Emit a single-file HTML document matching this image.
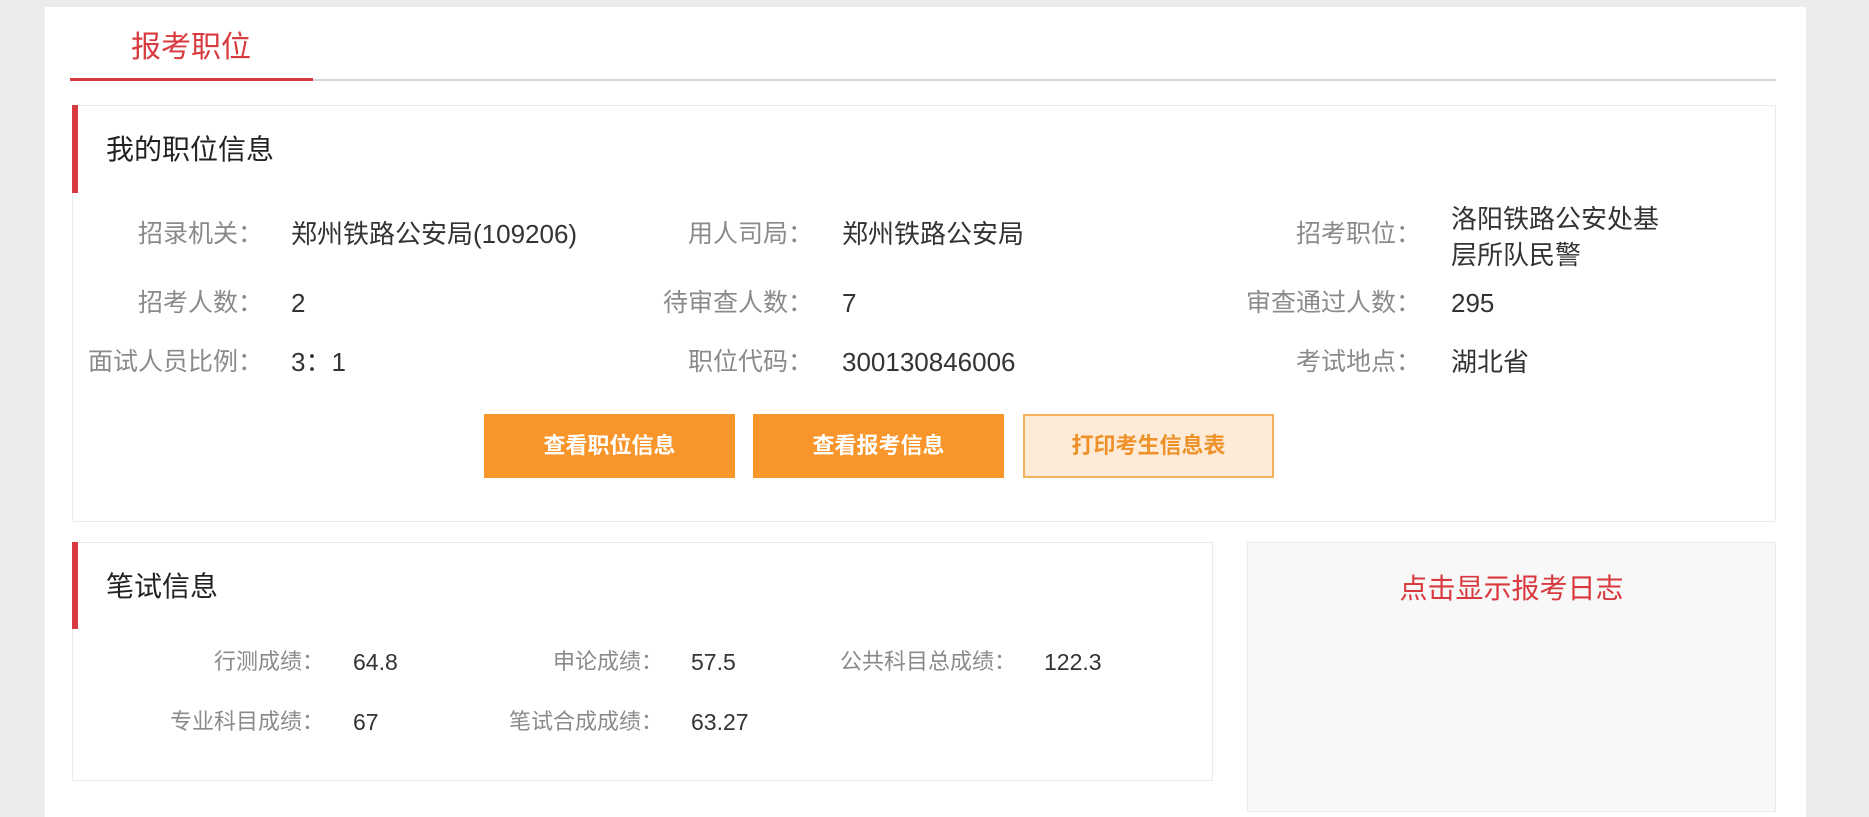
<!DOCTYPE html>
<html><head><meta charset="utf-8"><style>
*{margin:0;padding:0;box-sizing:border-box}
body{width:1869px;height:800px;background:#ececec;font-family:"Liberation Sans","Noto Sans CJK SC",sans-serif;position:relative;overflow:hidden}
.a{position:absolute;white-space:nowrap}
.lb{color:#8a8a8a;font-size:25px;text-align:right;line-height:30px}
.v{color:#333;font-size:26px;line-height:30px}
.lb2{color:#8a8a8a;font-size:22px;text-align:right;line-height:28px}
.v2{color:#333;font-size:23px;line-height:28px}
.btn{position:absolute;top:414px;height:64px;width:251px;background:#f8962b;color:#fff;font-weight:bold;font-size:22px;line-height:64px;text-align:center}
</style></head><body>
<div class="a" style="left:45px;top:7px;width:1761px;height:810px;background:#fff"></div>
<div class="a" style="left:131px;top:27px;font-size:30px;color:#d93a3f;line-height:42px">报考职位</div>
<div class="a" style="left:70px;top:79px;width:1706px;height:2px;background:#d8d8d8"></div>
<div class="a" style="left:70px;top:78px;width:243px;height:3px;background:#d93a3f"></div>

<div class="a" style="left:72px;top:105px;width:1704px;height:417px;border:1px solid #ebebeb"></div>
<div class="a" style="left:72px;top:105px;width:6px;height:88px;background:#d93a3f"></div>
<div class="a" style="left:106px;top:132px;font-size:28px;color:#222;line-height:36px">我的职位信息</div>

<div class="a lb" style="right:1606px;top:219px">招录机关：</div>
<div class="a v" style="left:291px;top:219px">郑州铁路公安局(109206)</div>
<div class="a lb" style="right:1056px;top:219px">用人司局：</div>
<div class="a v" style="left:842px;top:219px">郑州铁路公安局</div>
<div class="a lb" style="right:448px;top:219px">招考职位：</div>
<div class="a v" style="left:1451px;top:201px;line-height:36px">洛阳铁路公安处基<br>层所队民警</div>

<div class="a lb" style="right:1606px;top:288px">招考人数：</div>
<div class="a v" style="left:291px;top:288px">2</div>
<div class="a lb" style="right:1056px;top:288px">待审查人数：</div>
<div class="a v" style="left:842px;top:288px">7</div>
<div class="a lb" style="right:448px;top:288px">审查通过人数：</div>
<div class="a v" style="left:1451px;top:288px">295</div>

<div class="a lb" style="right:1606px;top:347px">面试人员比例：</div>
<div class="a v" style="left:291px;top:347px">3：1</div>
<div class="a lb" style="right:1056px;top:347px">职位代码：</div>
<div class="a v" style="left:842px;top:347px">300130846006</div>
<div class="a lb" style="right:448px;top:347px">考试地点：</div>
<div class="a v" style="left:1451px;top:347px">湖北省</div>

<div class="btn" style="left:484px">查看职位信息</div>
<div class="btn" style="left:753px">查看报考信息</div>
<div class="btn" style="left:1023px;background:#fdebd8;border:2px solid #f5b25c;color:#ee9128;line-height:60px">打印考生信息表</div>

<div class="a" style="left:72px;top:542px;width:1141px;height:239px;border:1px solid #ebebeb"></div>
<div class="a" style="left:72px;top:542px;width:6px;height:87px;background:#d93a3f"></div>
<div class="a" style="left:106px;top:569px;font-size:28px;color:#222;line-height:36px">笔试信息</div>

<div class="a lb2" style="right:1545px;top:648px">行测成绩：</div>
<div class="a v2" style="left:353px;top:648px">64.8</div>
<div class="a lb2" style="right:1206px;top:648px">申论成绩：</div>
<div class="a v2" style="left:691px;top:648px">57.5</div>
<div class="a lb2" style="right:853px;top:648px">公共科目总成绩：</div>
<div class="a v2" style="left:1044px;top:648px">122.3</div>
<div class="a lb2" style="right:1545px;top:708px">专业科目成绩：</div>
<div class="a v2" style="left:353px;top:708px">67</div>
<div class="a lb2" style="right:1206px;top:708px">笔试合成成绩：</div>
<div class="a v2" style="left:691px;top:708px">63.27</div>

<div class="a" style="left:1247px;top:542px;width:529px;height:270px;background:#f8f8f8;border:1px solid #ebebeb"></div>
<div class="a" style="left:1247px;top:571px;width:529px;text-align:center;font-size:28px;color:#d93a3f;line-height:36px">点击显示报考日志</div>
</body></html>
